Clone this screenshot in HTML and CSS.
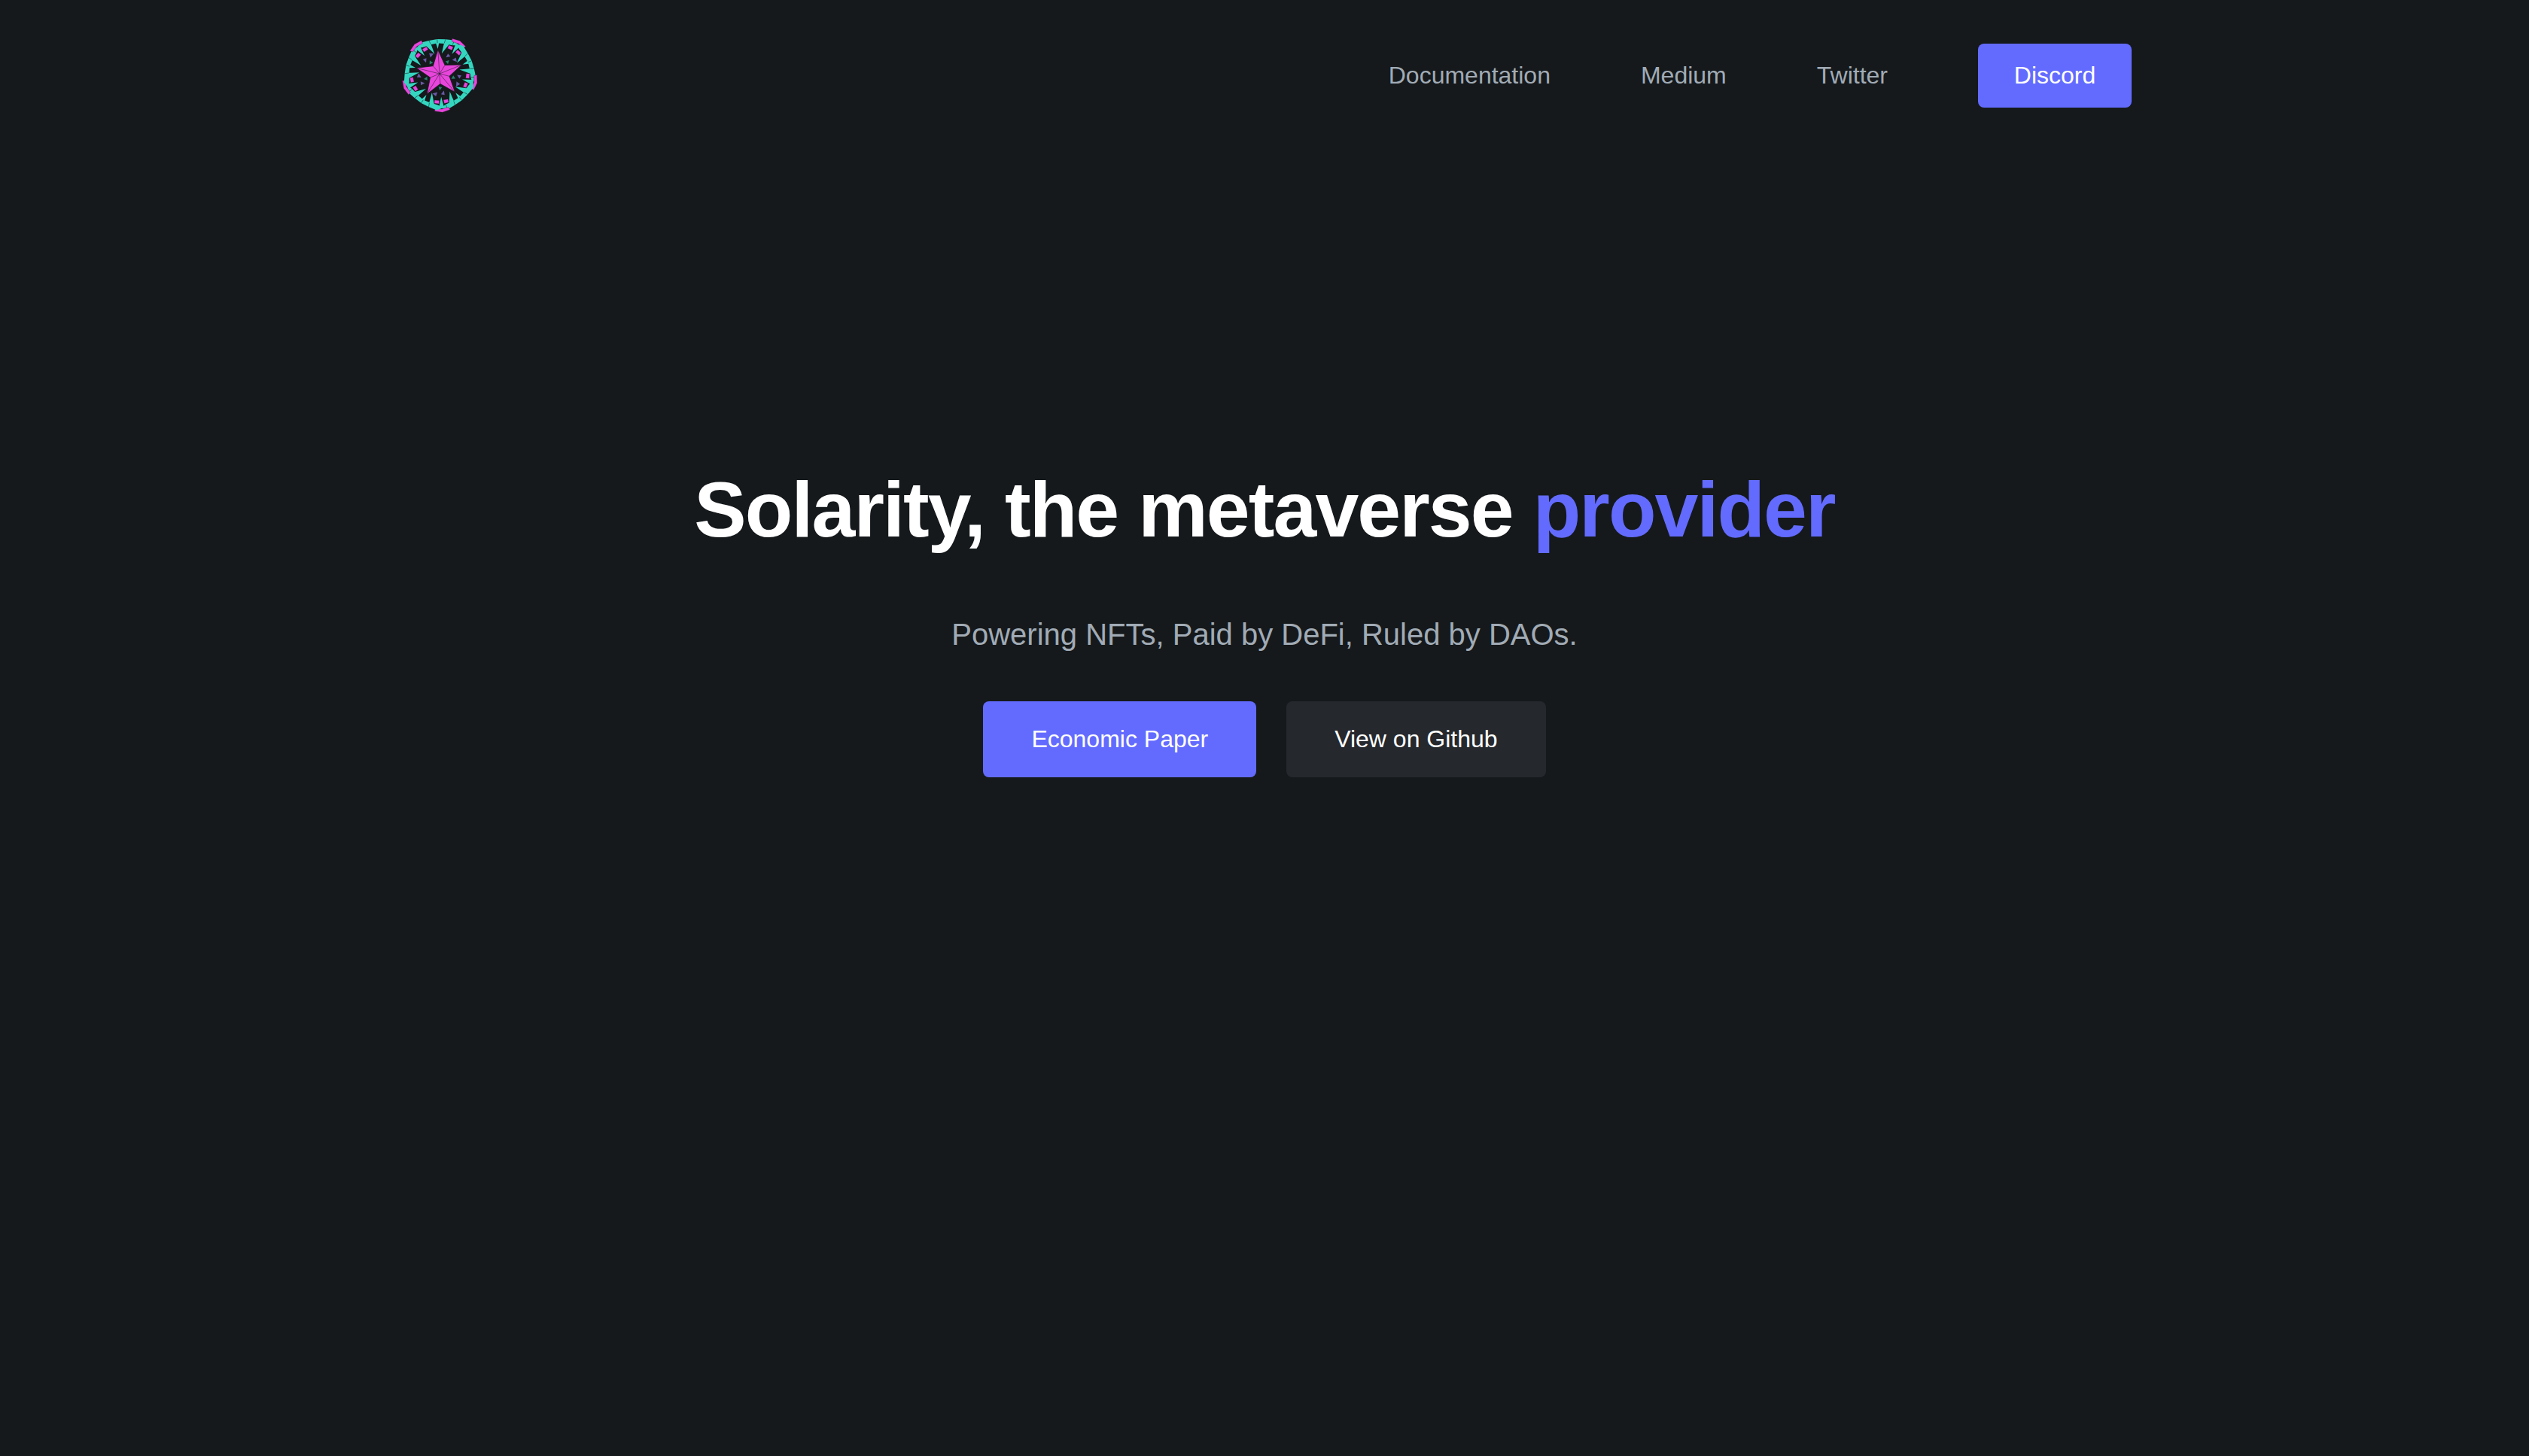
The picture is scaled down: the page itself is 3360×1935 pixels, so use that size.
FILE: index.html
```html
<!DOCTYPE html>
<html lang="en">
<head>
    <meta charset="UTF-8">
    <meta name="viewport" content="width=device-width, initial-scale=1.0">
    <title>Solarity</title>
    <link rel="stylesheet" href="styles.css">
</head>
<body>
    <header class="nav">
        <a class="logo" href="#">
            <svg class="logo-mark" viewBox="-56 -50 112 105">
                <defs>
                    <g id="sector">
                        <!-- teal band along one pentagon edge, with spoke and spikes -->
                        <path class="teal" d="M-22.5,-43 L-11,-45 L0,-46 L11,-45 L22.5,-43 L28,-36 L20,-36.5 L8.5,-39.5 L2,-40.5 L0,-33 L-2,-40.5 L-8.5,-39.5 L-20,-36.5 L-28,-36 Z"/>
                        <path class="teal" d="M24,-38 L29.5,-34 L18.2,-25 Z"/>
                        <path class="teal" d="M9.5,-42.5 L17.5,-40.5 L4.7,-26.6 Z"/>
                        <path class="teal" d="M-9.5,-42.5 L-17.5,-40.5 L-4.7,-26.6 Z"/>
                        <path class="seam" d="M0,-46 L0,-41 M11,-45 L9,-40 M-11,-45 L-9,-40 M22.5,-43 L20,-37"/>
                        <!-- magenta bits round the pentagon corner -->
                        <path class="pink" d="M20,-45.5 L30,-41.8 L37,-34 L34,-31.5 L28,-38 L19.5,-41.5 Z"/>
                        <path class="pink" d="M15,-37.1 L20.6,-34.3 L18.5,-30 L13,-33 Z"/>
                        <path class="pink" d="M26.2,-30.2 L30.6,-25.7 L27.6,-22.5 L23,-27 Z"/>
                        <!-- small bits between the star arms -->
                        <path class="violet" d="M13,-26 L16,-22 L10,-21 Z"/>
                        <path class="violet" d="M23,-20 L24,-14 L18,-17 Z"/>
                        <path class="green" d="M9,-16 L14,-17 L12,-12 Z"/>
                    </g>
                </defs>
                <g transform="rotate(-4)">
                    <use href="#sector"/>
                    <use href="#sector" transform="rotate(72)"/>
                    <use href="#sector" transform="rotate(144)"/>
                    <use href="#sector" transform="rotate(216)"/>
                    <use href="#sector" transform="rotate(288)"/>
                    <path class="star" d="M0,-32 L7.9,-10.9 L30.4,-9.9 L12.8,4.2 L18.8,25.9 L0,13.5 L-18.8,25.9 L-12.8,4.2 L-30.4,-9.9 L-7.9,-10.9 Z"/>
                    <path class="star-line" d="M0,-32 L0,13.5 M30.4,-9.9 L-12.8,4.2 M18.8,25.9 L-7.9,-10.9 M-18.8,25.9 L7.9,-10.9 M-30.4,-9.9 L12.8,4.2"/>
                </g>
            </svg>
        </a>
        <nav class="nav-links">
            <a href="#">Documentation</a>
            <a href="#">Medium</a>
            <a href="#">Twitter</a>
            <a class="btn btn-discord" href="#">Discord</a>
        </nav>
    </header>

    <main class="hero">
        <h1>Solarity, the metaverse <span class="accent">provider</span></h1>
        <p class="tagline">Powering NFTs, Paid by DeFi, Ruled by DAOs.</p>
        <div class="hero-buttons">
            <a class="btn btn-primary" href="#">Economic Paper</a>
            <a class="btn btn-dark" href="#">View on Github</a>
        </div>
    </main>
</body>
</html>
```

FILE: styles.css
```css
* {
    box-sizing: border-box;
}

body {
    margin: 0;
    min-height: 100vh;
    background-color: #15191c;
    font-family: "Liberation Sans", Arial, sans-serif;
    color: #fff;
}

a {
    text-decoration: none;
    color: inherit;
}

.nav {
    width: 2304px;
    margin: 0 auto;
    padding-top: 48px;
    display: flex;
    justify-content: space-between;
    align-items: flex-start;
}

.logo,
.logo-mark {
    display: block;
    width: 112px;
    height: 105px;
}

.teal { fill: #35d6c0; }
.seam { fill: none; stroke: #15191c; stroke-width: 0.5; }
.pink { fill: #e845dc; stroke: #15191c; stroke-width: 0.3; }
.violet { fill: #6a5aa8; }
.green { fill: #2a7f6c; }
.star { fill: #e845dc; stroke: #15191c; stroke-width: 0.8; }
.star-line { fill: none; stroke: #15191c; stroke-width: 0.5; }

.nav-links {
    display: flex;
    align-items: center;
    gap: 120px;
    height: 85px;
    margin-top: 10px;
    font-size: 32px;
    color: #a1abb5;
}

.btn {
    display: flex;
    align-items: center;
    justify-content: center;
    border-radius: 8px;
    color: #fff;
}

.btn-discord {
    width: 204px;
    height: 85px;
    background-color: #636bff;
}

.hero {
    padding-top: 461px;
    display: flex;
    flex-direction: column;
    align-items: center;
}

h1 {
    margin: 0;
    font-size: 104px;
    line-height: 126px;
    font-weight: 700;
    letter-spacing: -1.9px;
}

.accent {
    color: #636bff;
}

.tagline {
    margin: 78px 0 0;
    font-size: 40px;
    line-height: 50px;
    color: #a1abb5;
}

.hero-buttons {
    margin-top: 64px;
    display: flex;
    gap: 40px;
    font-size: 32px;
}

.hero-buttons .btn {
    height: 101px;
    padding: 0 64px;
}

.btn-primary {
    background-color: #636bff;
}

.btn-dark {
    background-color: #25282d;
}
```
